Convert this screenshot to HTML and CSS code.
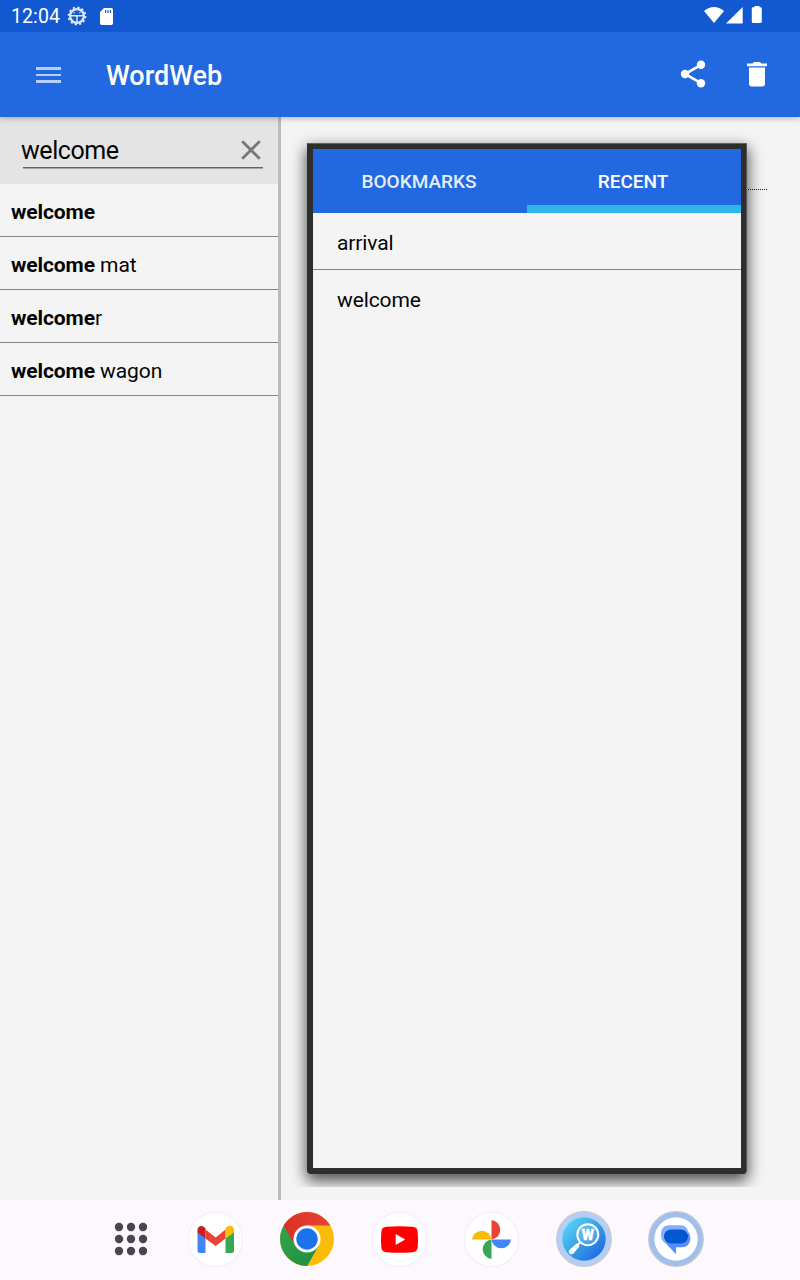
FILE: index.html
```html
<!DOCTYPE html>
<html lang="en">
<head>
<meta charset="utf-8">
<title>WordWeb</title>
<link rel="stylesheet" href="styles.css">
</head>
<body>
<div class="screen">
  <div class="status">
    <span class="time">12:04</span>
    <svg class="gear" width="20" height="20" viewBox="0 0 20 20" fill="none" stroke="#dce7fb"><circle cx="10" cy="10" r="8.500" stroke-width="1.800" stroke-dasharray="2.200 2.250"/><circle cx="10" cy="10" r="6.900" stroke-width="2.300"/><path d="M3.500 9.700h13M10 10v7" stroke-width="1.500"/><path d="M6.500 6.800h1.500M12 6.800h1.500" stroke-width="1"/></svg>
    <svg class="sd" width="14" height="18" viewBox="0 0 14 18"><path fill="#fff" d="M5 0h7.300A1.700 1.700 0 0 1 14 1.700v13.600a1.700 1.700 0 0 1-1.700 1.700H2.700A1.700 1.700 0 0 1 1 15.300V4z"/><path stroke="#1158d1" stroke-width="1.200" d="M6.600 2v3M9 2v3M11.500 2v3"/></svg>
    <svg class="signals" width="60" height="20" viewBox="0 0 60 20" fill="#fff"><path d="M0 5Q10-3 20 5L10 17z"/><path d="M38.700 1v16.500H22z"/><path d="M50.500 0h5v1.300h1a1.300 1.300 0 0 1 1.300 1.300v13a1.500 1.500 0 0 1-1.500 1.500h-7a1.500 1.500 0 0 1-1.500-1.500V2.600a1.300 1.300 0 0 1 1.300-1.300h1.400z"/></svg>
  </div>
  <header class="appbar">
    <svg class="menu" width="26" height="18" viewBox="0 0 26 18" fill="#b8cff7"><path d="M0 1h25v3H0zM0 8h25v2H0zM0 14h25v3H0z"/></svg>
    <h1 class="title">WordWeb</h1>
    <svg class="share" width="32" height="32" viewBox="0 0 32 32" fill="#fff"><path fill="none" stroke="#fff" stroke-width="2.600" d="M24 6.800L8 16l16 9.200"/><circle cx="24" cy="6.800" r="4.200"/><circle cx="8" cy="16" r="4.200"/><circle cx="24" cy="25.200" r="4.200"/></svg>
    <svg class="trash" width="20" height="25" viewBox="0 0 20 25" fill="#fff"><path d="M0 1.500h5.500L7 0h6l1.500 1.500H20v2.700H0zM2 5.500h16v16.300a2.700 2.700 0 0 1-2.700 2.700H4.700A2.700 2.700 0 0 1 2 21.800z"/></svg>
  </header>
  <main class="content">
    <section class="side">
      <div class="search">
        <div class="field"><span class="query">welcome</span>
          <svg width="20" height="20" viewBox="0 0 20 20" stroke="#777" stroke-width="2.700"><path d="M1.200 1.200l17.600 17.600M18.800 1.200L1.200 18.800"/></svg>
        </div>
      </div>
      <div class="word"><b>welcome</b></div>
      <div class="word"><b>welcome</b>&nbsp;mat</div>
      <div class="word"><b>welcome</b>r</div>
      <div class="word"><b>welcome</b>&nbsp;wagon</div>
    </section>
    <section class="detail">
      <div class="rule"></div>
      <div class="shade"><div class="popup"><div class="pane">
        <div class="tabs"><div class="tab">BOOKMARKS</div><div class="tab active">RECENT</div></div>
        <div class="item">arrival</div>
        <div class="item last">welcome</div>
      </div></div></div>
    </section>
  </main>
  <nav class="dock">
    <div class="cell first"><svg width="34" height="34" viewBox="0 0 34 34" fill="#45464f"><circle cx="5" cy="5" r="4.200"/><circle cx="17" cy="5" r="4.200"/><circle cx="29" cy="5" r="4.200"/><circle cx="5" cy="17" r="4.200"/><circle cx="17" cy="17" r="4.200"/><circle cx="29" cy="17" r="4.200"/><circle cx="5" cy="29" r="4.200"/><circle cx="17" cy="29" r="4.200"/><circle cx="29" cy="29" r="4.200"/></svg></div>
    <div class="cell"><svg class="app" width="53" height="53" viewBox="0.500 0.500 53 53"><circle cx="27" cy="27" r="27" fill="#fff"/><path fill="#4285f4" d="M9 19l8 6v15.500h-5.500A2.500 2.500 0 0 1 9 38z"/><path fill="#34a853" d="M37 25l8.500-6v19a2.500 2.500 0 0 1-2.500 2.500h-6z"/><path fill="#ea4335" d="M17 17l10.200 8L37 17v9l-9.800 7.500L17 26z"/><path fill="#c5221f" d="M9 20v-2.500c0-3.700 4-5 6.500-3L17 15.700V26l-8-6z"/><path fill="#fbbc04" d="M37 15.700l1.800-1.400c2.800-2.200 6.700-.5 6.700 3V20L37 26z"/></svg></div>
    <div class="cell"><svg width="54" height="54" viewBox="0 0 54 54"><defs><clipPath id="disc"><circle cx="27" cy="27" r="27"/></clipPath><linearGradient id="green" x1="0" y1="0" x2="1" y2="1"><stop stop-color="#35a853"/><stop offset="1" stop-color="#1d8b3d"/></linearGradient><linearGradient id="red"><stop stop-color="#d93025"/><stop offset="1" stop-color="#ea4335"/></linearGradient></defs><g clip-path="url(#disc)"><path fill="#fbbc09" d="M0 0h54v54H0z"/><path fill="url(#green)" d="M0 0l15.300 33.800L38.700 33.800 26 56H0z"/><path fill="url(#red)" d="M0 6l3.600 7.500 11.700 20.300L27 13.500h27V0H0z"/></g><circle cx="27" cy="27" r="13.500" fill="#fff"/><circle cx="27" cy="27" r="10.700" fill="#1a73e8"/></svg></div>
    <div class="cell"><svg class="app" width="53" height="53" viewBox="0.500 0.500 53 53"><circle cx="27" cy="27" r="27" fill="#fff"/><path fill="#f00" d="M14 14.200q13-1 26 0 4.800.2 5.200 5 .7 7.800 0 15.600-.4 4.800-5.200 5-13 1-26 0-4.800-.2-5.200-5-.7-7.800 0-15.600.4-4.800 5.200-5z"/><path fill="#fff" d="M23.200 21.500v11l9.500-5.500z"/></svg></div>
    <div class="cell"><svg class="app" width="53" height="53" viewBox="0.500 0.500 53 53"><circle cx="27" cy="27" r="27" fill="#fff"/><path fill="#ea4335" d="M27 7.500a9.800 9.800 0 0 1 0 19.500z"/><path fill="#4285f4" d="M46.500 27a9.800 9.800 0 0 1-19.500 0z"/><path fill="#34a853" d="M27 46.500a9.800 9.800 0 0 1 0-19.500z"/><path fill="#fbbc04" d="M7.500 27a9.800 9.800 0 0 1 19.500 0z"/></svg></div>
    <div class="cell"><svg width="56" height="56" viewBox="0 0 56 56"><defs><linearGradient id="ww" x1="0.100" y1="0.100" x2="0.900" y2="0.900"><stop stop-color="#55d5f7"/><stop offset="0.500" stop-color="#379fe8"/><stop offset="1" stop-color="#2268e1"/></linearGradient></defs><circle cx="28" cy="28" r="27.300" fill="#b3cff5" stroke="#c9cad2" stroke-width="1.300"/><circle cx="28" cy="28" r="21.700" fill="url(#ww)"/><circle cx="31.800" cy="23.700" r="10.500" fill="#fff" fill-opacity=".15" stroke="#fff" stroke-width="2"/><path stroke="#fff" stroke-width="2" d="M24.500 31l-3 3"/><path fill="#fff" d="M20.500 32.500l3 2.800-6 7.200c-2.500 2.300-6-.8-4.300-3.500z"/><text x="31.900" y="28.500" text-anchor="middle" class="lens">W</text></svg></div>
    <div class="cell"><svg width="56" height="56" viewBox="0 0 56 56"><circle cx="28" cy="28" r="27.300" fill="#a0bfec" stroke="#c7c9cf" stroke-width="1.300"/><circle cx="28" cy="28" r="21.700" fill="#fff"/><path fill="#598cff" d="M18 18h16a8.300 8.300 0 0 1 8.300 8.300v2a8 8 0 0 1-8 8H28v7L16.500 31z"/><path fill="#85adff" d="M20 14.300h13a7.500 7.500 0 0 1 7 9.700L17.500 32.500a11 11 0 0 1-4.700-8.500q0-8.500 7.200-9.700z"/><rect x="16" y="18.500" width="24" height="14" rx="7" fill="#0057d0"/></svg></div>
  </nav>
</div>
</body>
</html>
```
FILE: styles.css
```css
* { box-sizing: border-box; }
body { margin: 0; font-family: Roboto, sans-serif; color: #040404; }
svg { display: block; flex: none; }
.screen { width: 800px; height: 1280px; display: flex; flex-direction: column; background: #f4f4f4; overflow: hidden; }
.status { height: 32px; background: #1158d1; display: flex; align-items: flex-start; padding-left: 11px; position: relative; z-index: 2; }
.time { color: #fff; font-size: 19.5px; line-height: 23px; padding-top: 5px; width: 56px; white-space: nowrap; letter-spacing: .1px; }
.gear { margin-top: 6px; }
.sd { margin: 8px 0 0 12px; }
.signals { margin: 6px 36px 0 auto; }
.appbar { height: 85px; flex: none; background: #2269e1; display: flex; align-items: center; padding: 0 33px 0 36px; position: relative; z-index: 1; box-shadow: 0 1px 6px rgba(0,0,0,.3); }
.title { margin: 3px auto 0 44px; color: #fff; font-size: 27px; font-weight: 500; line-height: 32px; }
.share { margin: 0 38px 1px 0; }
.trash { margin-bottom: 1px; }
.content { flex: 1; display: flex; min-height: 0; }
.side { width: 281px; border-right: 3px solid #bcbcbc; }
.search { height: 67px; background: #e4e4e4; padding: 16px 15px 0 22px; }
.field { height: 35px; display: flex; justify-content: space-between; padding-right: 2px; margin-left: 1px; border-bottom: 1px solid #646464; box-shadow: 0 1px #a5a5a5; }
.field svg { margin-top: 7px; }
.query { font-size: 25px; line-height: 35px; margin-left: -2px; letter-spacing: -.45px; }
.word { height: 53px; border-bottom: 1px solid #858585; padding: 4px 0 0 11px; display: flex; align-items: center; font-size: 21px; letter-spacing: -.1px; }
.word b { font-weight: 700; }
.detail { flex: 1; position: relative; }
.rule { margin: 72px 33px 0 26px; border-top: 1px dotted #222; }
.shade { position: absolute; inset: 0 0 13px 0; padding: 26px 53px 13px 26px; overflow: hidden; }
.popup { height: 1031px; padding: 5px; border: 1px solid #2d2f2f; border-top-color: #626464; border-right-color: #565858; border-radius: 1px 1px 4px 4px; background: #2d2f2f; box-shadow: 0 6px 15px 1px rgba(0,0,0,.68); }
.pane { height: 100%; background: #f4f4f4; }
.tabs { height: 64px; display: flex; background: #2269e1; }
.tab { width: 50%; display: flex; align-items: center; justify-content: center; font-size: 19px; font-weight: 500; color: #e6eefb; padding: 0 2px 0 0; }
.tab.active { color: #fff; border-bottom: 8px solid #30b4ec; padding: 8px 2px 0 0; }
.item { height: 57px; padding: 3px 0 0 24px; display: flex; align-items: center; font-size: 21px; letter-spacing: -.1px; border-bottom: 1px solid #858585; }
.item.last { border: 0; }
.dock { height: 80px; background: #fdf8fe; display: flex; align-items: center; padding: 0 0 2px 93.500px; }
.cell { width: 92.200px; flex: none; display: flex; justify-content: center; }
.cell.first { width: 75.500px; }
.app { border-radius: 50%; box-shadow: 0 0 2px rgba(0,0,0,.16); }
.lens { font: 900 14px Roboto, sans-serif; fill: #fff; stroke: #fff; stroke-width: .3px; }
```
